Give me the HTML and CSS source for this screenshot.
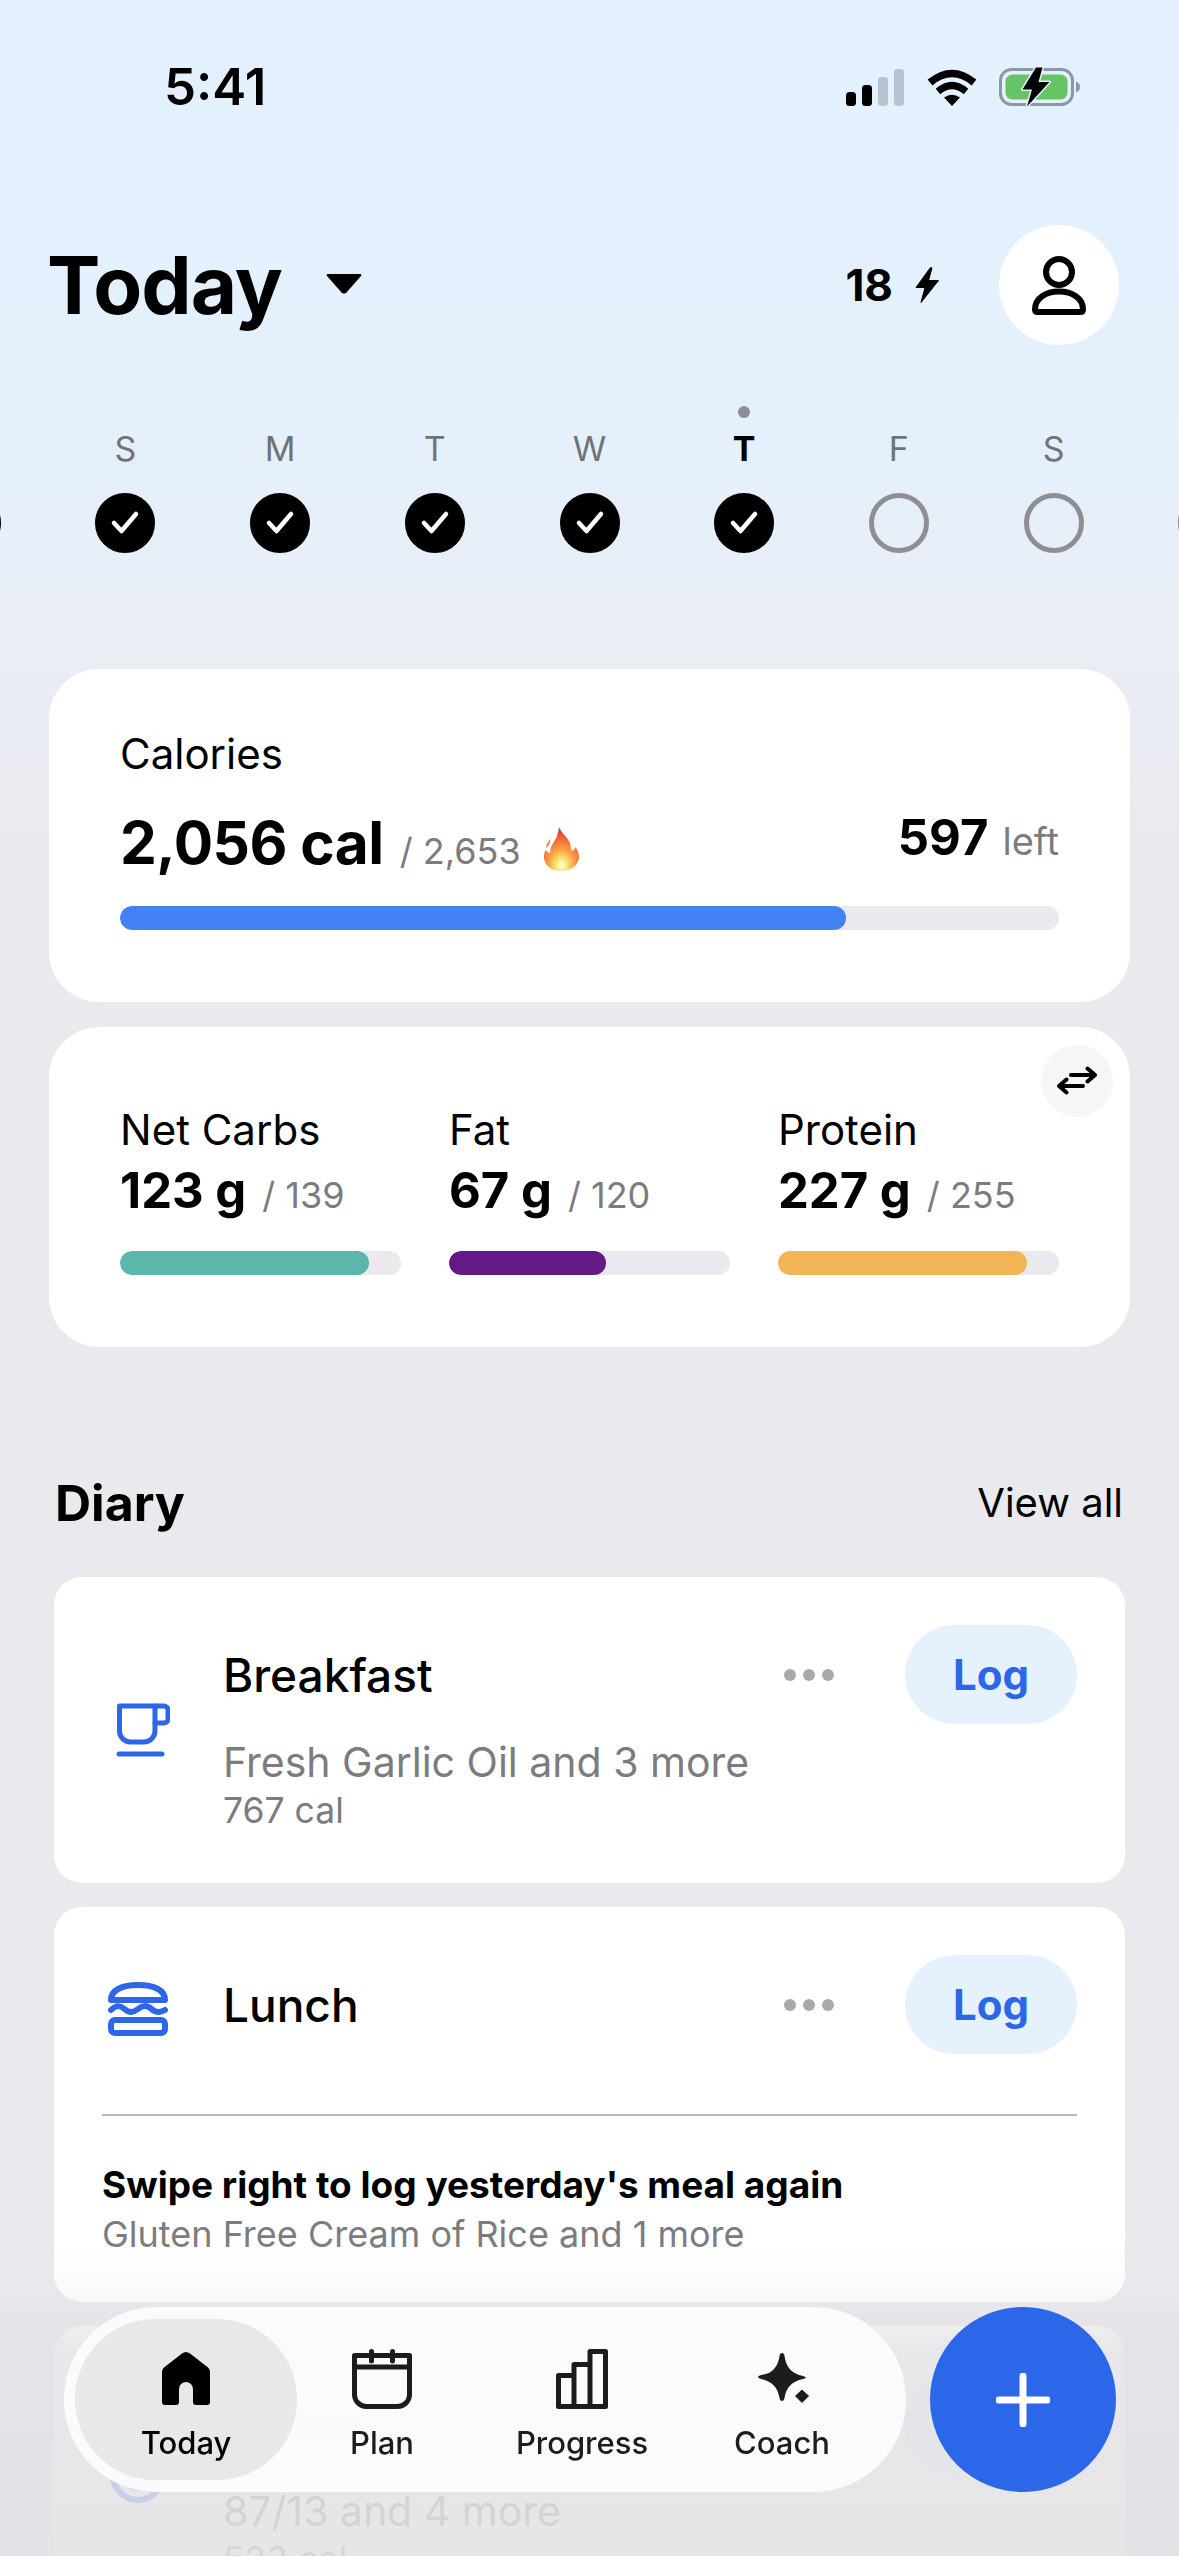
FILE: index.html
```html
<!DOCTYPE html>
<html lang="en">
<head>
<meta charset="utf-8">
<title>Today</title>
<link rel="stylesheet" href="styles.css">
</head>
<body>
<div class="screen">
  <div class="status">
    <span class="time">5:41</span>
    <div class="status-icons">
      <svg class="ico-signal" width="58" height="37" viewBox="0 0 58 37"><rect x="0" y="23" width="10" height="14" rx="3.500" fill="#000"/><rect x="16" y="16" width="10" height="21" rx="3.500" fill="#000"/><rect x="32" y="8" width="10" height="29" rx="3.500" fill="#b8c5d0"/><rect x="48" y="0" width="10" height="37" rx="3.500" fill="#b8c5d0"/></svg>
      <svg class="ico-wifi" width="50" height="37" viewBox="0 0 50 37"><path d="M3 13.500Q25 -4.500 47 13.500" fill="none" stroke="#000" stroke-width="7.500"/><path d="M11 22.500Q25 10.500 39 22.500" fill="none" stroke="#000" stroke-width="7"/><path d="M17 28.500Q25 23 33 28.500L25 37Z" fill="#000"/></svg>
      <svg class="ico-batt" width="82" height="40" viewBox="0 0 82 40"><rect x="1.500" y="2.500" width="72" height="35" rx="11" fill="none" stroke="#8b97a3" stroke-width="3"/><rect x="6.500" y="7.500" width="62" height="25" rx="7" fill="#66c466"/><path d="M77 14.500Q81 16 81 20Q81 24 77 25.500Z" fill="#8b97a3"/><path d="M37 0.500L23.500 22.500H33L28 39.500L50.500 15H39.500L43.500 0.500Z" fill="#000" stroke="#e3f1fe" stroke-width="3" paint-order="stroke" stroke-linejoin="round"/></svg>
    </div>
  </div>

  <header class="head">
    <div class="head-left">
      <h1 class="title">Today</h1>
      <svg class="caret" width="36" height="20" viewBox="0 0 36 20"><path d="M2 0H34Q36 0 35 2L20 19Q18 20 16 19L1 2Q0 0 2 0Z" fill="#000"/></svg>
    </div>
    <div class="head-right">
      <span class="streak">18</span>
      <svg class="streak-bolt" width="24" height="36" viewBox="0 0 24 36"><path d="M15.500 0.500L1 20.500H10L6 35.500L23.500 13.500H13.500L17 1Z" fill="#000" stroke="#000" stroke-width="1" stroke-linejoin="round"/></svg>
      <div class="avatar">
        <svg width="54" height="60" viewBox="0 0 54 60"><circle cx="27" cy="17" r="13" fill="none" stroke="#000" stroke-width="6"/><path d="M3 54.500C3 43 14 36.500 27 36.500C40 36.500 51 43 51 54.500Q51 57 48 57H6Q3 57 3 54.500Z" fill="none" stroke="#000" stroke-width="6" stroke-linejoin="round"/></svg>
      </div>
    </div>
  </header>

  <div class="week">
    <div class="day"><i class="today-dot off"></i><span class="day-l">&nbsp;</span><b class="circle check"></b></div>
    <div class="day"><i class="today-dot off"></i><span class="day-l">S</span><b class="circle check"><svg width="32" height="28" viewBox="0 0 32 28"><path d="M5 14L12.500 22L27 5" fill="none" stroke="#fff" stroke-width="4.500" stroke-linecap="round" stroke-linejoin="round"/></svg></b></div>
    <div class="day"><i class="today-dot off"></i><span class="day-l">M</span><b class="circle check"><svg width="32" height="28" viewBox="0 0 32 28"><path d="M5 14L12.500 22L27 5" fill="none" stroke="#fff" stroke-width="4.500" stroke-linecap="round" stroke-linejoin="round"/></svg></b></div>
    <div class="day"><i class="today-dot off"></i><span class="day-l">T</span><b class="circle check"><svg width="32" height="28" viewBox="0 0 32 28"><path d="M5 14L12.500 22L27 5" fill="none" stroke="#fff" stroke-width="4.500" stroke-linecap="round" stroke-linejoin="round"/></svg></b></div>
    <div class="day"><i class="today-dot off"></i><span class="day-l">W</span><b class="circle check"><svg width="32" height="28" viewBox="0 0 32 28"><path d="M5 14L12.500 22L27 5" fill="none" stroke="#fff" stroke-width="4.500" stroke-linecap="round" stroke-linejoin="round"/></svg></b></div>
    <div class="day"><i class="today-dot"></i><span class="day-l now">T</span><b class="circle check"><svg width="32" height="28" viewBox="0 0 32 28"><path d="M5 14L12.500 22L27 5" fill="none" stroke="#fff" stroke-width="4.500" stroke-linecap="round" stroke-linejoin="round"/></svg></b></div>
    <div class="day"><i class="today-dot off"></i><span class="day-l">F</span><b class="circle"></b></div>
    <div class="day"><i class="today-dot off"></i><span class="day-l">S</span><b class="circle"></b></div>
    <div class="day"><i class="today-dot off"></i><span class="day-l">&nbsp;</span><b class="circle"></b></div>
  </div>

  <section class="card cal-card">
    <div class="label">Calories</div>
    <div class="cal-row">
      <div class="cal-main">
        <span class="cal-big">2,056 cal</span>
        <span class="cal-of">/ 2,653</span>
        <svg class="flame" width="36" height="44" viewBox="0 0 36 44"><defs><radialGradient id="fl" cx=".5" cy=".86" r=".78" fx=".5" fy=".88"><stop offset="0" stop-color="#fffbe0"/><stop offset=".2" stop-color="#fde47a"/><stop offset=".45" stop-color="#fba544"/><stop offset=".75" stop-color="#f26b38"/><stop offset="1" stop-color="#d8432c"/></radialGradient></defs><path d="M16 0C18 6 24 9 27 16C28 21 28 23 29 24C31 23 32 22 32.500 20C35 24 36 27 36 30C36 38 28 44 18 44C8 44 1 38 1 30C1 27 1.500 25 3 23C4 25 5 26 7 26C7 19 12 14 14 9C15 6 15.500 3 16 0Z" fill="url(#fl)"/><path d="M3 21C3 17 5 15 7 12C7.500 15 7 18 3 21Z" fill="#f08a50"/></svg>
      </div>
      <div class="cal-left"><span class="left-num">597</span><span class="left-txt">left</span></div>
    </div>
    <div class="bar"><div class="fill fill-blue" style="width:77.3%"></div></div>
  </section>

  <section class="card macro-card">
    <button class="swap" type="button"><svg width="44" height="30" viewBox="0 0 44 30"><path d="M16 9H40M32.500 2.500L40 9L32.500 15.500M28 20H4M11.500 13.500L4 20L11.500 26.500" fill="none" stroke="#000" stroke-width="4" stroke-linecap="round" stroke-linejoin="round"/></svg></button>
    <div class="macros">
      <div class="macro">
        <div class="label">Net Carbs</div>
        <div class="macro-val"><span class="macro-big">123 g</span><span class="macro-of">/ 139</span></div>
        <div class="bar"><div class="fill fill-teal" style="width:88.5%"></div></div>
      </div>
      <div class="macro">
        <div class="label">Fat</div>
        <div class="macro-val"><span class="macro-big">67 g</span><span class="macro-of">/ 120</span></div>
        <div class="bar"><div class="fill fill-purple" style="width:56%"></div></div>
      </div>
      <div class="macro">
        <div class="label">Protein</div>
        <div class="macro-val"><span class="macro-big">227 g</span><span class="macro-of">/ 255</span></div>
        <div class="bar"><div class="fill fill-orange" style="width:88.5%"></div></div>
      </div>
    </div>
  </section>

  <div class="diary-head">
    <h2 class="diary-title">Diary</h2>
    <span class="view-all">View all</span>
  </div>

  <section class="meal">
    <div class="meal-main tall">
      <div class="meal-icon"><svg width="62" height="64" viewBox="0 0 62 64"><g fill="none" stroke="#2b67e8" stroke-width="5" stroke-linejoin="round" stroke-linecap="round"><path d="M11.500 8H47V33A11 11 0 0 1 36 44H22.500A11 11 0 0 1 11.500 33Z"/><path d="M47 8H56A4 4 0 0 1 60 12V21A4 4 0 0 1 56 25H47"/><path d="M11 56H54"/></g></svg></div>
      <div class="meal-body">
        <div class="meal-top">
          <span class="meal-name">Breakfast</span>
          <span class="dots"><i></i><i></i><i></i></span>
          <span class="log">Log</span>
        </div>
        <div class="meal-sub">Fresh Garlic Oil and 3 more</div>
        <div class="meal-cal">767 cal</div>
      </div>
    </div>
  </section>

  <section class="meal">
    <div class="meal-main">
      <div class="meal-icon"><svg width="62" height="64" viewBox="0 0 62 64"><g fill="none" stroke="#2b67e8" stroke-width="6" stroke-linejoin="round" stroke-linecap="round"><path d="M3 27C3 17 14 12 30 12C46 12 57 17 57 27Z"/><path d="M3 37C8 32 12 32 16.500 36C21 40 25 40 30 36C35 32 39 32 43.500 36C48 40 52 40 57 37"/><rect x="3" y="47" width="54" height="13" rx="4"/></g></svg></div>
      <div class="meal-body">
        <div class="meal-top">
          <span class="meal-name">Lunch</span>
          <span class="dots"><i></i><i></i><i></i></span>
          <span class="log">Log</span>
        </div>
      </div>
    </div>
    <div class="divider"></div>
    <div class="swipe">
      <div class="swipe-title">Swipe right to log yesterday's meal again</div>
      <div class="swipe-sub">Gluten Free Cream of Rice and 1 more</div>
    </div>
  </section>

  <section class="meal">
    <div class="meal-main tall">
      <div class="meal-icon"><svg width="62" height="64" viewBox="0 0 62 64"><g fill="none" stroke="#2b67e8" stroke-width="6"><circle cx="30" cy="28" r="25"/><circle cx="30" cy="28" r="13"/></g></svg></div>
      <div class="meal-body">
        <div class="meal-top">
          <span class="meal-name">Dinner</span>
          <span class="dots"><i></i><i></i><i></i></span>
          <span class="log">Log</span>
        </div>
        <div class="meal-sub">87/13 and 4 more</div>
        <div class="meal-cal">523 cal</div>
      </div>
    </div>
  </section>

  <div class="fade"></div>

  <div class="dock">
    <nav class="nav">
      <a class="tab tab-today active">
        <svg width="60" height="60" viewBox="0 0 60 60"><path d="M30 3Q32 3 34 4.500L52 18.500Q54 20 54 23V53Q54 56 51 56H40Q37 56 37 53V40A7 7 0 0 0 23 40V53Q23 56 20 56H9Q6 56 6 53V23Q6 20 8 18.500L26 4.500Q28 3 30 3Z" fill="#000"/></svg>
        <span>Today</span>
      </a>
      <a class="tab tab-plan">
        <svg width="60" height="60" viewBox="0 0 60 60"><g fill="none" stroke="#1c1c1e" stroke-width="5" stroke-linecap="round"><path d="M2.500 6.500H57.500V46A12 12 0 0 1 45.500 57.500H14.500A12 12 0 0 1 2.500 46Z" stroke-linejoin="round"/><path d="M2.500 18H57.500"/><path d="M19.500 2.500V12M40.500 2.500V12"/></g></svg>
        <span>Plan</span>
      </a>
      <a class="tab tab-progress">
        <svg width="52" height="60" viewBox="0 0 52 60"><path d="M2.500 26.500H18V15.500H34V2.500H49.500V57.500H2.500ZM18 26.500V57.500M34 15.500V57.500" fill="none" stroke="#1c1c1e" stroke-width="5" stroke-linejoin="round"/></svg>
        <span>Progress</span>
      </a>
      <a class="tab tab-coach">
        <svg width="60" height="60" viewBox="0 0 60 60"><path d="M30 4Q32 4 32.500 7C34 18 40 25 51 27Q54 28 54 28.500Q54 29 51 30C40 32 34 39 32.500 49Q32 52 30 52Q28 52 27.500 49C26 39 20 32 9 30Q6 29 6 28Q6 27 9 26C20 25 26 18 27.500 7Q28 4 30 4Z" fill="#1c1c1e"/><path d="M50 41L56.500 47L50 53.500L43.500 47Z" fill="#1c1c1e" stroke="#1c1c1e" stroke-width="1" stroke-linejoin="round"/></svg>
        <span>Coach</span>
      </a>
    </nav>
    <button class="fab" type="button"><svg width="54" height="54" viewBox="0 0 54 54"><path d="M27 3V51M3 27H51" stroke="#fff" stroke-width="7" stroke-linecap="round" fill="none"/></svg></button>
  </div>
</div>
</body>
</html>
```

FILE: styles.css
```css
* { box-sizing: border-box; }
html, body { margin: 0; padding: 0; }
body { font-family: Inter, "Noto Sans", sans-serif; color: #000; }

.screen {
  position: relative;
  width: 1179px;
  height: 2556px;
  overflow: hidden;
  background: linear-gradient(180deg, #e3f1fe 0, #e4f1fd 400px, #e9edf4 640px, #e9e9ee 920px);
}

.status {
  height: 136px;
  padding: 57px 98px 0 164px;
  display: flex;
  justify-content: space-between;
  align-items: flex-start;
}
.time { font-size: 51px; line-height: 60px; font-weight: 600; }
.status-icons { display: flex; align-items: flex-start; padding-top: 12px; }
.ico-wifi { margin-left: 23px; }
.ico-batt { margin-left: 22px; margin-top: -2px; }

.head {
  margin-top: 89px;
  height: 120px;
  padding: 0 60px 0 47px;
  display: flex;
  justify-content: space-between;
  align-items: center;
}
.head-left { display: flex; align-items: center; }
.title { margin: 0; font-size: 80px; line-height: 96px; font-weight: 700; letter-spacing: -1px; }
.caret { margin-left: 44px; margin-top: -2px; }
.head-right { display: flex; align-items: center; }
.streak { font-size: 44px; line-height: 50px; font-weight: 700; }
.streak-bolt { margin-left: 22px; margin-right: 60px; }
.avatar {
  width: 120px;
  height: 120px;
  border-radius: 50%;
  background: #fff;
  display: flex;
  align-items: center;
  justify-content: center;
}

.week {
  margin-top: 61px;
  display: flex;
  justify-content: center;
  width: 1179px;
}
.day {
  flex: 0 0 154.7px;
  display: flex;
  flex-direction: column;
  align-items: center;
}
.today-dot { width: 12px; height: 12px; border-radius: 50%; background: #8e8e93; }
.today-dot.off { background: transparent; }
.day-l {
  margin-top: 10px;
  height: 42px;
  line-height: 42px;
  font-size: 34px;
  color: #6f7278;
}
.day-l.now { color: #000; font-weight: 700; }
.circle {
  margin-top: 23px;
  width: 60px;
  height: 60px;
  border-radius: 50%;
  border: 5px solid #8e8e93;
  display: flex;
  align-items: center;
  justify-content: center;
}
.circle.check { background: #000; border-color: #000; }

.card {
  position: relative;
  margin: 0 49px;
  background: #fff;
  border-radius: 50px;
  padding: 0 71px;
}
.cal-card { margin-top: 116px; height: 333px; padding-top: 61px; }
.macro-card { margin-top: 25px; height: 320px; padding-top: 79px; }

.label { font-size: 42px; line-height: 48px; font-weight: 400; }

.cal-row {
  margin-top: 27px;
  display: flex;
  justify-content: space-between;
  align-items: flex-start;
  height: 101px;
}
.cal-main { display: flex; align-items: baseline; }
.cal-big { font-size: 58.500px; line-height: 76px; font-weight: 700; letter-spacing: -0.500px; }
.cal-of { margin-left: 16px; font-size: 36px; color: #7c7c80; }
.flame { margin-left: 22px; align-self: flex-start; margin-top: 22px; }
.cal-left { display: flex; align-items: baseline; }
.left-num { font-size: 49px; line-height: 66px; font-weight: 700; }
.left-txt { margin-left: 14px; font-size: 38px; color: #7c7c80; }

.bar {
  height: 24px;
  border-radius: 12px;
  background: #e9e9ee;
  overflow: hidden;
}
.fill { height: 100%; border-radius: 12px; }
.fill-blue { background: #4382f5; }
.fill-teal { background: #5cb6ae; }
.fill-purple { background: #631986; }
.fill-orange { background: #f2b556; }

.swap {
  position: absolute;
  top: 18px;
  right: 17px;
  width: 72px;
  height: 72px;
  padding: 0;
  border: 0;
  border-radius: 50%;
  background: #f6f6f8;
  display: flex;
  align-items: center;
  justify-content: center;
}

.macros { display: grid; grid-template-columns: repeat(3, 1fr); column-gap: 48px; }
.macro-val { margin-top: 7px; height: 62px; display: flex; align-items: baseline; }
.macro-big { font-size: 49px; line-height: 60px; font-weight: 700; }
.macro-of { margin-left: 16px; font-size: 36px; color: #7c7c80; }
.macro .bar { margin-top: 28px; }

.diary-head {
  margin: 124px 56px 0 55px;
  height: 64px;
  display: flex;
  justify-content: space-between;
  align-items: center;
}
.diary-title { margin: 0; font-size: 50px; line-height: 64px; font-weight: 700; }
.view-all { font-size: 40px; line-height: 48px; font-weight: 400; }

.meal {
  margin: 42px 54px 0;
  background: #fff;
  border-radius: 28px;
}
.meal + .meal { margin-top: 24px; }
.meal-main { display: flex; align-items: center; padding: 48px 48px 0 0; }
.meal-main.tall { padding-top: 0; }
.meal-main.tall .meal-body { padding-top: 48px; }
.meal-icon { flex: 0 0 169px; padding-left: 54px; display: flex; }
.meal-body { flex: 1; min-width: 0; }
.meal-top { display: flex; align-items: center; height: 99px; }
.meal-name { font-size: 46px; line-height: 56px; font-weight: 500; flex: 1; }
.dots { display: flex; gap: 7px; margin-right: 71px; }
.dots i { width: 12px; height: 12px; border-radius: 50%; background: #a9a9ac; }
.log {
  width: 172px;
  height: 99px;
  border-radius: 50px;
  background: #e5f1fd;
  color: #2b67e8;
  font-size: 42px;
  font-weight: 700;
  display: flex;
  align-items: center;
  justify-content: center;
}
.meal-sub { margin-top: 14px; font-size: 41px; line-height: 48px; color: #7c7c80; }
.meal-cal { margin-top: 4px; margin-bottom: 51px; font-size: 35.500px; line-height: 42px; color: #7c7c80; }

.divider { margin: 60px 48px 0; height: 2px; background: #b8b8bb; }
.swipe { padding: 47px 48px 47px; }
.swipe-title { font-size: 37px; line-height: 44px; font-weight: 700; }
.swipe-sub { margin-top: 6px; font-size: 36px; line-height: 42px; color: #7c7c80; }

.fade {
  position: absolute;
  left: 0;
  right: 0;
  bottom: 0;
  height: 320px;
  pointer-events: none;
  background: linear-gradient(180deg, rgba(226,226,229,0) 0, rgba(226,226,229,.12) 50px, rgba(226,226,229,.78) 110px, rgba(226,226,229,.88) 100%);
}

.dock {
  position: absolute;
  left: 64px;
  top: 2307px;
  display: flex;
  gap: 24px;
}
.nav {
  width: 842px;
  height: 185px;
  padding: 12px 39px 12px 11px;
  border-radius: 93px;
  background: rgba(252,252,254,.94);
  backdrop-filter: blur(10px);
  display: flex;
}
.tab {
  height: 161px;
  padding-top: 30px;
  border-radius: 80px;
  display: flex;
  flex-direction: column;
  align-items: center;
  color: #1c1c1e;
}
.tab svg { display: block; }
.tab span { margin-top: 14px; font-size: 31px; line-height: 40px; font-weight: 500; }
.tab-today { width: 222px; }
.tab-plan { width: 170px; }
.tab-progress { width: 230px; }
.tab-coach { width: 170px; }
.tab.active { background: rgba(228,228,231,.85); color: #000; }

.fab {
  width: 186px;
  height: 185px;
  padding: 0;
  border: 0;
  border-radius: 50%;
  background: #2b67e8;
  display: flex;
  align-items: center;
  justify-content: center;
}
```
